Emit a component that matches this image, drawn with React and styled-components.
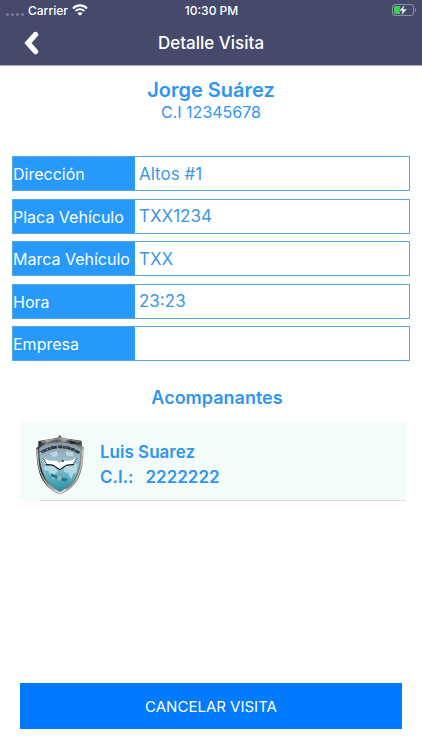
import React from "react"
import styled, { createGlobalStyle } from "styled-components"

const fields = [
    { id: "direccion", label: "Dirección", value: "Altos #1" },
    { id: "placa", label: "Placa Vehículo", value: "TXX1234" },
    { id: "marca", label: "Marca Vehículo", value: "TXX" },
    { id: "hora", label: "Hora", value: "23:23" },
    { id: "empresa", label: "Empresa", value: "" },
]

const companions = [{ name: "Luis Suarez", ci: "2222222" }]

const WifiIcon = () => (
    <svg width="16" height="12" viewBox="0 0 16 12" fill="none" stroke="#fff" strokeWidth="2.1">
        <path d="M1 4.4C5 .4 11 .4 15 4.4" />
        <path d="M3.6 7.1c2.6-2.5 6.2-2.5 8.8 0" />
        <path d="M8 11.8 5.4 9.2c1.5-1.4 3.7-1.4 5.2 0z" fill="#fff" stroke="none" />
    </svg>
)

const BatteryIcon = () => (
    <svg width="25" height="12" viewBox="0 0 25 12">
        <rect x=".5" y=".5" width="21" height="11" rx="2.5" fill="none" stroke="#8b8ea6" />
        <path d="M23 4v4c1.6-.6 1.6-3.4 0-4z" fill="#8b8ea6" />
        <path d="M3 2h5v8H3a1 1 0 0 1-1-1V3a1 1 0 0 1 1-1z" fill="#35cf5b" />
        <path d="M12.8 .8 6.8 6.9h3.4L9.2 11.4l6-6.3h-3.5z" fill="#fff" stroke="#454a6b" strokeWidth=".6" />
    </svg>
)

const BackIcon = () => (
    <svg width="16" height="24" viewBox="0 0 16 24" fill="none">
        <path d="M11.5 3.5 4 12l7.5 8.5" stroke="#fff" strokeWidth="5.4" strokeLinecap="round" strokeLinejoin="miter" />
    </svg>
)

const Emblem = () => (
    <svg width="48" height="60" viewBox="0 0 144 180" role="img" aria-label="Teckem Seguridad">
        <defs>
            <linearGradient id="rim" x1="0" y1="0" x2="1" y2="1">
                <stop offset="0" stopColor="#262626" />
                <stop offset=".2" stopColor="#555" />
                <stop offset=".38" stopColor="#222" />
                <stop offset=".6" stopColor="#999" />
                <stop offset=".8" stopColor="#777" />
                <stop offset="1" stopColor="#222" />
            </linearGradient>
            <linearGradient id="sea" x1="0" y1="0" x2="0" y2="1">
                <stop offset="0" stopColor="#83949d" />
                <stop offset=".35" stopColor="#9bbccb" />
                <stop offset=".65" stopColor="#66b7cb" />
                <stop offset="1" stopColor="#278da2" />
            </linearGradient>
            <linearGradient id="crown" x1="0" y1="0" x2="1" y2="0">
                <stop offset="0" stopColor="#222" />
                <stop offset=".2" stopColor="#999" />
                <stop offset=".42" stopColor="#555" />
                <stop offset=".6" stopColor="#aaa" />
                <stop offset=".75" stopColor="#222" />
                <stop offset="1" stopColor="#555" />
            </linearGradient>
            <path id="arc" d="M8 62Q71 16 138 63" />
        </defs>
        {/* chrome rim and globe */}
        <path d="M8 19 54 11 67 8l4-8 5 8 12 3 48 7 1 15 6 3c-1 60-6 116-71 142C8 154 2 95 1 39l7-6z" fill="url(#rim)" />
        <path d="M4 43c1 53 8 102 68 132 57-25 66-75 68-132" fill="none" stroke="#ccc" strokeWidth="3" />
        <path d="M10 40 28 27l43-9 46 9 16 14c-1 51-5 100-61 128C17 141 11 93 10 40z" fill="url(#sea)" />
        <path d="m22 96 17-6 17 5 10 14-9 8-3 17-10-12-8-16-10 1zM86 94l17-9 22 3-4 25-9 3-7 17-9-19-12-4zM42 54l20-5 6 12-18 5zM88 48l22 4 3 12-20-1z" fill="#c7e3e9" opacity=".75" />
        {/* top plate */}
        <path d="M8 19 54 11 67 8l4-8 5 8 12 3 48 7 1 15-14-5-18-2-12-5H47l-14 5-17 2-8 6z" fill="url(#crown)" stroke="#333" />
        <path d="m15 20 38-7 19-2 21 2 37 7" fill="none" stroke="#c4c4c4" strokeWidth="2" />
        <text fontFamily="Liberation Serif, serif" fontSize="11" fontWeight="700" fill="#111" stroke="#111" strokeWidth=".8" textAnchor="middle">
            <textPath href="#arc" startOffset="50%">TECKEM SEGURIDAD</textPath>
        </text>
        {/* wings */}
        <path d="M23 68c11 9 25 10 39 9l9 7 9-7c15 1 30 0 42-9l-1 8-4 3 2 3-6 5-20 2-22 14-22-14-20-2-6-5 2-3-4-3z" fill="#fff" />
        <path d="m21 70 6 7m-2 2 7 6m91-15-6 7m2 2-7 6" stroke="#222" strokeWidth="3" />
        <path d="M30 88c10 3 18 0 24 4l17 12 18-12c7-4 15-1 25-4" fill="none" stroke="#222" strokeWidth="3.5" />
        <circle cx="80" cy="78" r="3" fill="#222" />
        {/* satellite */}
        <g fill="#247989">
            <path d="m45 115 20 8v9l-21-8zM76 128l18 2-3 10-17-4z" />
            <circle cx="70" cy="130" r="7" fill="#9ab4bd" />
            <path d="m66 116 9-5 2 9-5 5z" fill="#80a8b5" />
        </g>
        <path d="m55 165 17 9 19-12" fill="none" stroke="#e7e7e7" strokeWidth="4" />
    </svg>
)

export default function App() {
    return (
        <Screen>
            <GlobalStyle />
            <Header>
                <StatusBar>
                    <Carrier>
                        <Signal><i /><i /><i /><i /></Signal>
                        <span>Carrier</span>
                        <WifiIcon />
                    </Carrier>
                    <span>10:30 PM</span>
                    <Battery><BatteryIcon /></Battery>
                </StatusBar>
                <NavBar>
                    <BackButton type="button" aria-label="Volver"><BackIcon /></BackButton>
                    <Title>Detalle Visita</Title>
                </NavBar>
            </Header>

            <Visitor>
                <VisitorName>Jorge Suárez</VisitorName>
                <VisitorId>C.I 12345678</VisitorId>
            </Visitor>

            <Fields>
                {fields.map(({ id, label, value }) => (
                    <Field key={id}>
                        <Label htmlFor={id}>{label}</Label>
                        <Value id={id} value={value} readOnly />
                    </Field>
                ))}
            </Fields>

            <SectionTitle>Acompanantes</SectionTitle>
            <Companions>
                {companions.map(({ name, ci }) => (
                    <Companion key={ci}>
                        <Emblem />
                        <CompanionText>
                            <span>{name}</span>
                            <IdLine><span>C.I.:</span><span>{ci}</span></IdLine>
                        </CompanionText>
                    </Companion>
                ))}
            </Companions>

            <CancelButton type="button">CANCELAR VISITA</CancelButton>
        </Screen>
    )
}

const GlobalStyle = createGlobalStyle`
    *{
        box-sizing: border-box;
    }
    body{
        margin: 0;
        background: #fff;
    }
    button, input{
        font-family: inherit;
    }
`

const Screen = styled.div`
    display: flex;
    flex-direction: column;
    min-height: 100vh;
    font-family: Inter, "Liberation Sans", sans-serif;
    color: #2f95ee;
`

const Header = styled.header`
    background: #454a6b;
    border-bottom: 1px solid #a7a9bc;
    color: #fff;
`

const StatusBar = styled.div`
    display: grid;
    grid-template-columns: 1fr auto 1fr;
    align-items: center;
    height: 20px;
    padding: 0 5px 0 6px;
    font-size: 12px;
    font-weight: 500;
`

const Carrier = styled.div`
    display: flex;
    align-items: center;
    gap: 4px;
`

const Signal = styled.div`
    display: flex;
    gap: 2px;
    padding-top: 8px;
    i{
        width: 3px;
        height: 3px;
        border-radius: 50%;
        background: #777b95;
    }
`

const Battery = styled.div`
    display: flex;
    justify-content: flex-end;
`

const NavBar = styled.div`
    display: grid;
    grid-template-columns: 48px 1fr 48px;
    align-items: center;
    height: 45px;
`

const BackButton = styled.button`
    display: flex;
    justify-content: flex-end;
    padding: 0 8px 0 0;
    border: 0;
    background: none;
    cursor: pointer;
`

const Title = styled.h1`
    margin: 0;
    font-size: 17px;
    font-weight: 500;
    text-align: center;
`

const Visitor = styled.section`
    padding: 12px 0 32px;
    text-align: center;
`

const VisitorName = styled.h2`
    margin: 0;
    font-size: 20px;
    line-height: 24px;
    font-weight: 600;
`

const VisitorId = styled.p`
    margin: 0;
    font-size: 16px;
    line-height: 20px;
`

const Fields = styled.div`
    display: flex;
    flex-direction: column;
    justify-content: space-between;
    min-height: 205px;
    margin: 2px 12px 0;
`

const Field = styled.div`
    display: flex;
    height: 35px;
    border: 1px solid #56a6e8;
`

const Label = styled.label`
    flex: 0 0 122px;
    background: #2699fb;
    color: #fff;
    font-size: 16px;
    line-height: 34px;
    white-space: nowrap;
`

const Value = styled.input`
    flex: 1;
    min-width: 0;
    padding: 0 4px;
    border: 0;
    outline: 0;
    background: #fff;
    color: #3d97e3;
    font-size: 17px;
`

const SectionTitle = styled.h2`
    margin: 25px 0 12px;
    padding-left: 12px;
    font-size: 18px;
    line-height: 24px;
    font-weight: 600;
    text-align: center;
`

const Companions = styled.ul`
    margin: 0 16px 0 20px;
    padding: 0;
    list-style: none;
`

const Companion = styled.li`
    display: flex;
    align-items: center;
    gap: 16px;
    min-height: 79px;
    padding: 8px 16px 2px;
    background: linear-gradient(#d5dfe3, #d5dfe3) 20px 100% / 100% 1px no-repeat, #f3fbfb;
`

const CompanionText = styled.div`
    display: flex;
    flex-direction: column;
    font-size: 17px;
    line-height: 25px;
    font-weight: 600;
`

const IdLine = styled.div`
    display: flex;
    gap: 12px;
`

const CancelButton = styled.button`
    height: 46px;
    margin: auto 20px 21px;
    padding: 0;
    border: 0;
    background: #007aff;
    color: #fff;
    font-size: 15px;
    cursor: pointer;
`
